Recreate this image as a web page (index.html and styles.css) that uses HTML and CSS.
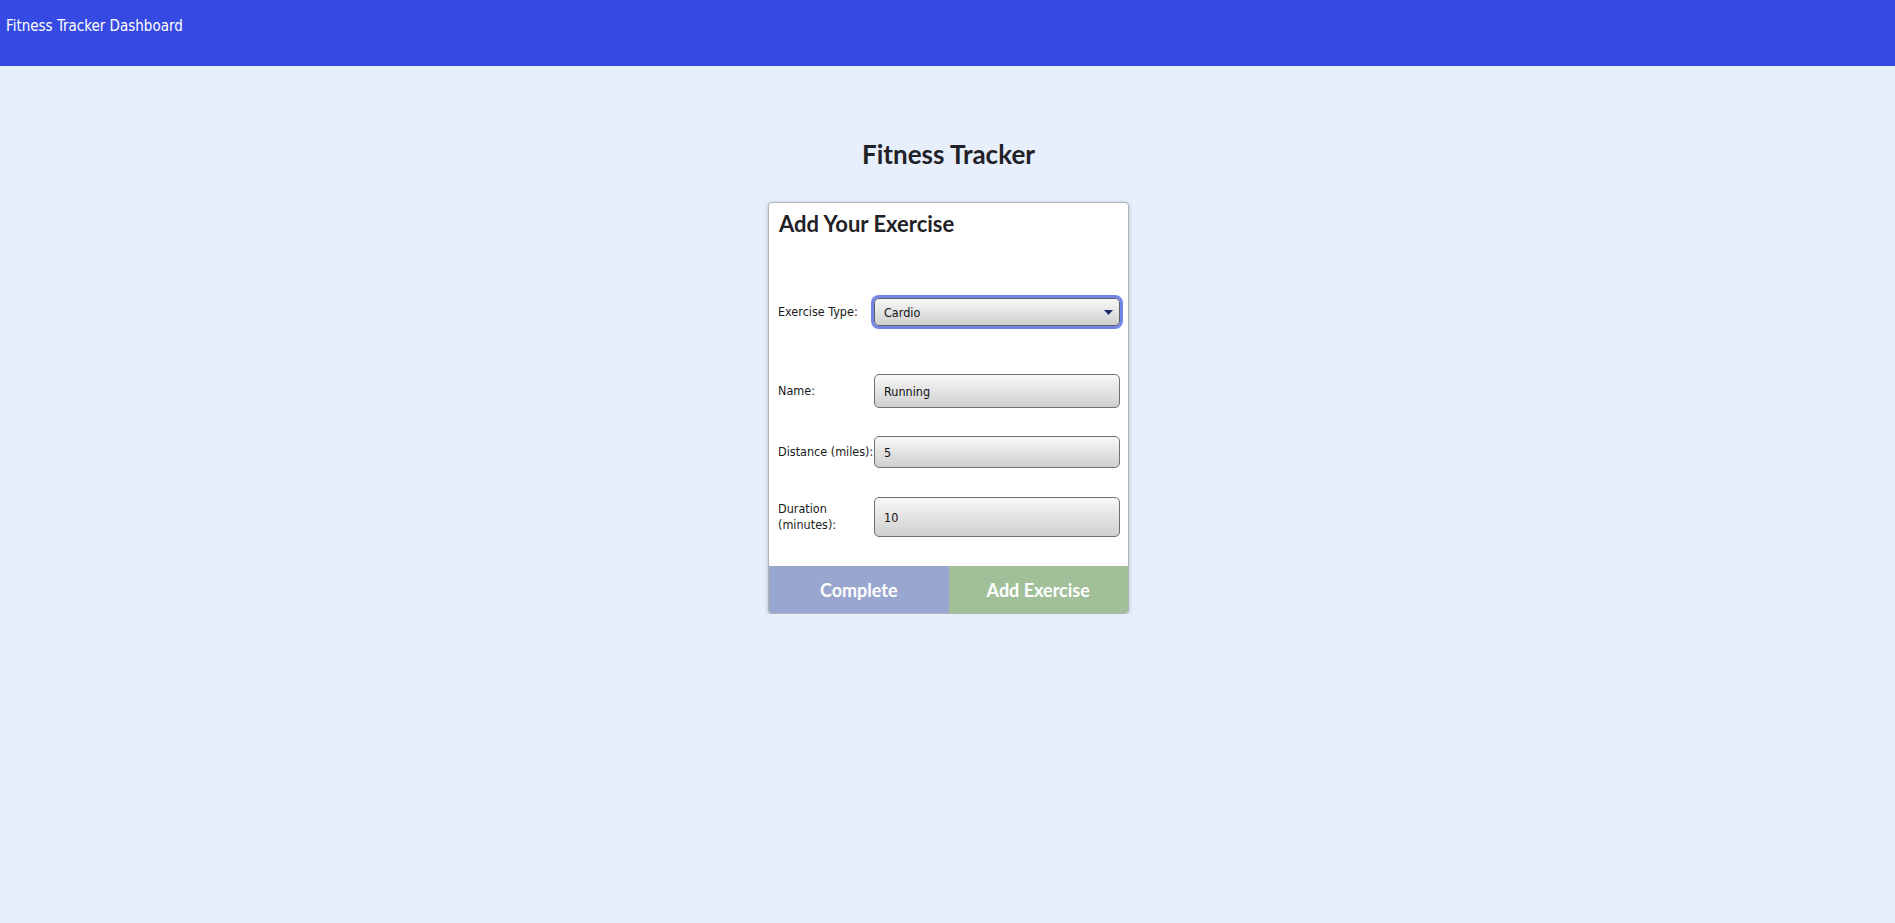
FILE: index.html
```html
<!DOCTYPE html>
<html lang="en">
<head>
    <meta charset="UTF-8">
    <meta name="viewport" content="width=device-width, initial-scale=1.0">
    <title>Fitness Tracker Dashboard</title>
    <link rel="stylesheet" href="styles.css">
</head>
<body>
    <header class="topbar">Fitness Tracker Dashboard</header>

    <main class="page">
        <h1 class="page-title">Fitness Tracker</h1>

        <div class="card">
            <h2 class="card-title">Add Your Exercise</h2>

            <form class="exercise-form" onsubmit="return false">
                <div class="form-row row-type">
                    <label for="exType">Exercise Type:</label>
                    <div class="select-wrap">
                        <select id="exType" class="field field-select">
                            <option>Cardio</option>
                            <option>Resistance</option>
                        </select>
                        <svg class="select-arrow" width="9" height="5" viewBox="0 0 9 5"><path d="M0 0h9L4.5 5z" fill="#1c2a6b"/></svg>
                    </div>
                </div>

                <div class="form-row row-name">
                    <label for="exName">Name:</label>
                    <input id="exName" class="field" type="text" value="Running">
                </div>

                <div class="form-row row-distance">
                    <label for="exDistance">Distance (miles):</label>
                    <input id="exDistance" class="field" type="text" value="5">
                </div>

                <div class="form-row row-duration">
                    <label for="exDuration">Duration (minutes):</label>
                    <input id="exDuration" class="field" type="text" value="10">
                </div>
            </form>

            <div class="card-actions">
                <button class="btn btn-complete">Complete</button>
                <button class="btn btn-add">Add Exercise</button>
            </div>
        </div>
    </main>
</body>
</html>
```

FILE: styles.css
```css
body {
    margin: 0;
    background-color: #e7eefc;
    font-family: "DejaVu Sans Condensed", "DejaVu Sans", sans-serif;
    color: #1f2126;
}
.topbar {
    height: 66px;
    box-sizing: border-box;
    padding: 17px 6px 0;
    background-color: #364ae3;
    color: #fff;
    font-size: 15px;
}
.page {
    display: flex;
    flex-direction: column;
    align-items: center;
    padding-left: 2px;
}
.page-title {
    margin: 73px 0 33px;
    font-family: Lato, sans-serif;
    font-size: 26px;
    font-weight: 700;
    line-height: 30px;
}
.card {
    width: 361px;
    box-sizing: border-box;
    background-color: #fff;
    border: 1px solid #b3b3b3;
    border-radius: 4px;
    box-shadow: 0 1px 4px rgba(0, 0, 0, 0.22);
    overflow: hidden;
}
.card-title {
    margin: 0;
    padding: 7px 10px 0;
    font-family: Lato, sans-serif;
    font-size: 22px;
    font-weight: 700;
    line-height: 27px;
}
.exercise-form {
    padding: 0 7px 0 9px;
}
.form-row {
    display: grid;
    grid-template-columns: 96px 246px;
    align-items: center;
}
.form-row label {
    font-size: 12.5px;
    line-height: 16px;
    color: #1a1a1a;
}
.row-type { margin-top: 61px; height: 28px; }
.row-name { margin-top: 48px; height: 34px; }
.row-distance { margin-top: 28px; height: 32px; }
.row-duration { margin-top: 29px; height: 40px; }
.row-duration label { padding-right: 30px; }

.field {
    width: 100%;
    height: 100%;
    box-sizing: border-box;
    margin: 0;
    padding: 0 9px;
    border: 1px solid #707070;
    border-radius: 5px;
    background: linear-gradient(#f8f8f8, #cfcfcf);
    font-family: "DejaVu Sans Condensed", "DejaVu Sans", sans-serif;
    font-size: 12.5px;
    color: #111;
    outline: none;
}
.select-wrap {
    position: relative;
    height: 100%;
}
.field-select {
    appearance: none;
    -webkit-appearance: none;
    border-color: #5f5f5f;
    box-shadow: 0 0 0 3px #7084e9;
}
.select-arrow {
    position: absolute;
    right: 7px;
    top: 12px;
}
.card-actions {
    display: flex;
    margin-top: 29px;
}
.btn {
    flex: 1;
    height: 47px;
    border: none;
    color: #fff;
    font-family: Lato, sans-serif;
    font-size: 18px;
    font-weight: 700;
    cursor: pointer;
}
.btn-complete {
    background-color: #99a6cf;
}
.btn-add {
    background-color: #a1c09a;
}
```
